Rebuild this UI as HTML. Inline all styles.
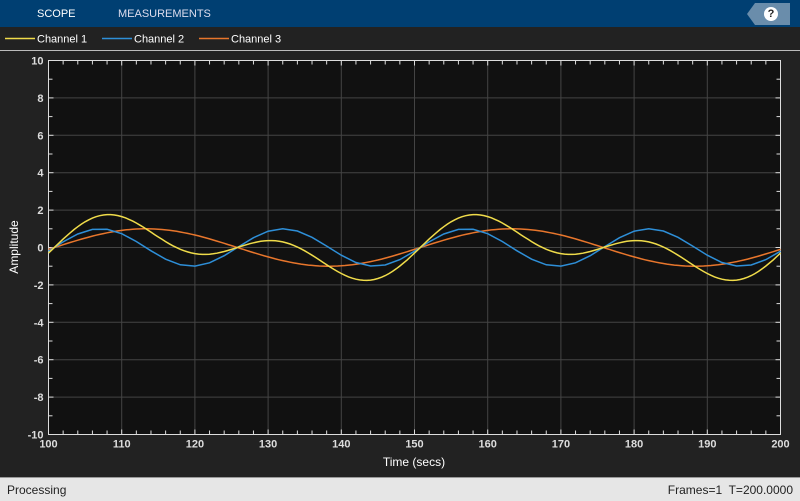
<!DOCTYPE html>
<html><head><style>
body{margin:0;width:800px;height:500px;overflow:hidden;background:#222;font-family:"Liberation Sans",sans-serif}
#top{position:absolute;left:0;top:0;width:800px;height:27px;background:#003f72}
.tab{position:absolute;top:8px;font-size:11px;color:#fff}
#leg{position:absolute;top:27px;left:0;width:800px;height:23px;background:#222;border-bottom:1px solid #bbb}
#status{position:absolute;top:477px;left:0;width:800px;height:23px;background:#e6e6e6;border-top:1px solid #999;font-size:12px;color:#222}
svg{position:absolute;left:0;top:0}
</style></head><body>
<div id="top">
<div class="tab" style="left:37px">SCOPE</div>
<div class="tab" style="left:118px;color:#dde">MEASUREMENTS</div>
<div style="position:absolute;left:747px;top:3px;width:43px;height:22px;background:#6a8dab;clip-path:polygon(8px 0,100% 0,100% 100%,8px 100%,0 50%)"></div>
<div style="position:absolute;left:764px;top:7px;width:14px;height:14px;border-radius:50%;background:#fff;color:#222;font-size:11px;font-weight:bold;text-align:center;line-height:14px">?</div>
</div>
<div id="leg"></div>
<div id="status"><span style="position:absolute;left:7px;top:5px">Processing</span><span style="position:absolute;right:7px;top:5px">Frames=1&nbsp; T=200.0000</span></div>
<svg id="s" width="800" height="500" xmlns="http://www.w3.org/2000/svg"></svg>
<script>
var L=48.5,R=780.5,T=60.5,B=434.5;
function X(t){return L+(t-100)*(R-L)/100}
function Y(v){return T+(10-v)*(B-T)/20}
var h='';
var lg=[[5,'#f0dc4a','Channel 1'],[102,'#2e8fd8','Channel 2'],[199,'#e8762c','Channel 3']];
lg.forEach(function(a){h+='<line x1="'+a[0]+'" y1="38.5" x2="'+(a[0]+30)+'" y2="38.5" stroke="'+a[1]+'" stroke-width="1.5"/><text x="'+(a[0]+32)+'" y="42.5" fill="#fff" font-size="11">'+a[2]+'</text>';});
h+='<rect x="'+L+'" y="'+T+'" width="'+(R-L)+'" height="'+(B-T)+'" fill="#111"/>';
for(var t=110;t<200;t+=10)h+='<line x1="'+X(t)+'" y1="'+T+'" x2="'+X(t)+'" y2="'+B+'" stroke="#444"/>';
for(var v=-8;v<=8;v+=2)h+='<line x1="'+L+'" y1="'+Y(v)+'" x2="'+R+'" y2="'+Y(v)+'" stroke="#444"/>';
for(var t=100;t<=200;t+=2){var m=t%10==0?5:4;h+='<line x1="'+X(t)+'" y1="'+B+'" x2="'+X(t)+'" y2="'+(B-m)+'" stroke="#ddd"/><line x1="'+X(t)+'" y1="'+T+'" x2="'+X(t)+'" y2="'+(T+m)+'" stroke="#ddd"/>';}
for(var v=-10;v<=10;v+=1){var m=v%2==0?5:4;h+='<line x1="'+L+'" y1="'+Y(v)+'" x2="'+(L+m)+'" y2="'+Y(v)+'" stroke="#ddd"/><line x1="'+R+'" y1="'+Y(v)+'" x2="'+(R-m)+'" y2="'+Y(v)+'" stroke="#ddd"/>';}
h+='<rect x="'+L+'" y="'+T+'" width="'+(R-L)+'" height="'+(B-T)+'" fill="none" stroke="#ddd"/>';
for(var t=100;t<=200;t+=10)h+='<text x="'+X(t)+'" y="'+(B+13)+'" fill="#ddd" font-size="11" font-weight="bold" text-anchor="middle">'+t+'</text>';
for(var v=-10;v<=10;v+=2)h+='<text x="'+(L-5)+'" y="'+(Y(v)+4)+'" fill="#ddd" font-size="11" font-weight="bold" text-anchor="end">'+v+'</text>';
h+='<text x="414" y="466" fill="#fff" font-size="12" text-anchor="middle">Time (secs)</text>';
h+='<text transform="translate(18,247) rotate(-90)" fill="#fff" font-size="12" text-anchor="middle">Amplitude</text>';
var w=2*Math.PI/50, S=100.8;
function path(f,step,c){var d='';for(var t=100;t<=200.001;t+=step)d+=(d?'L':'M')+X(t).toFixed(1)+' '+Y(f(t)).toFixed(1);return '<path d="'+d+'" fill="none" stroke="'+c+'" stroke-width="1.5"/>';}
h+=path(function(t){return Math.sin(w*(t-S))},0.5,'#e8762c');
h+=path(function(t){return Math.sin(2*w*(t-S))},2,'#2e8fd8');
h+=path(function(t){return Math.sin(w*(t-S))+Math.sin(2*w*(t-S))},0.5,'#f0dc4a');
document.getElementById('s').innerHTML=h;
</script>
</body></html>
